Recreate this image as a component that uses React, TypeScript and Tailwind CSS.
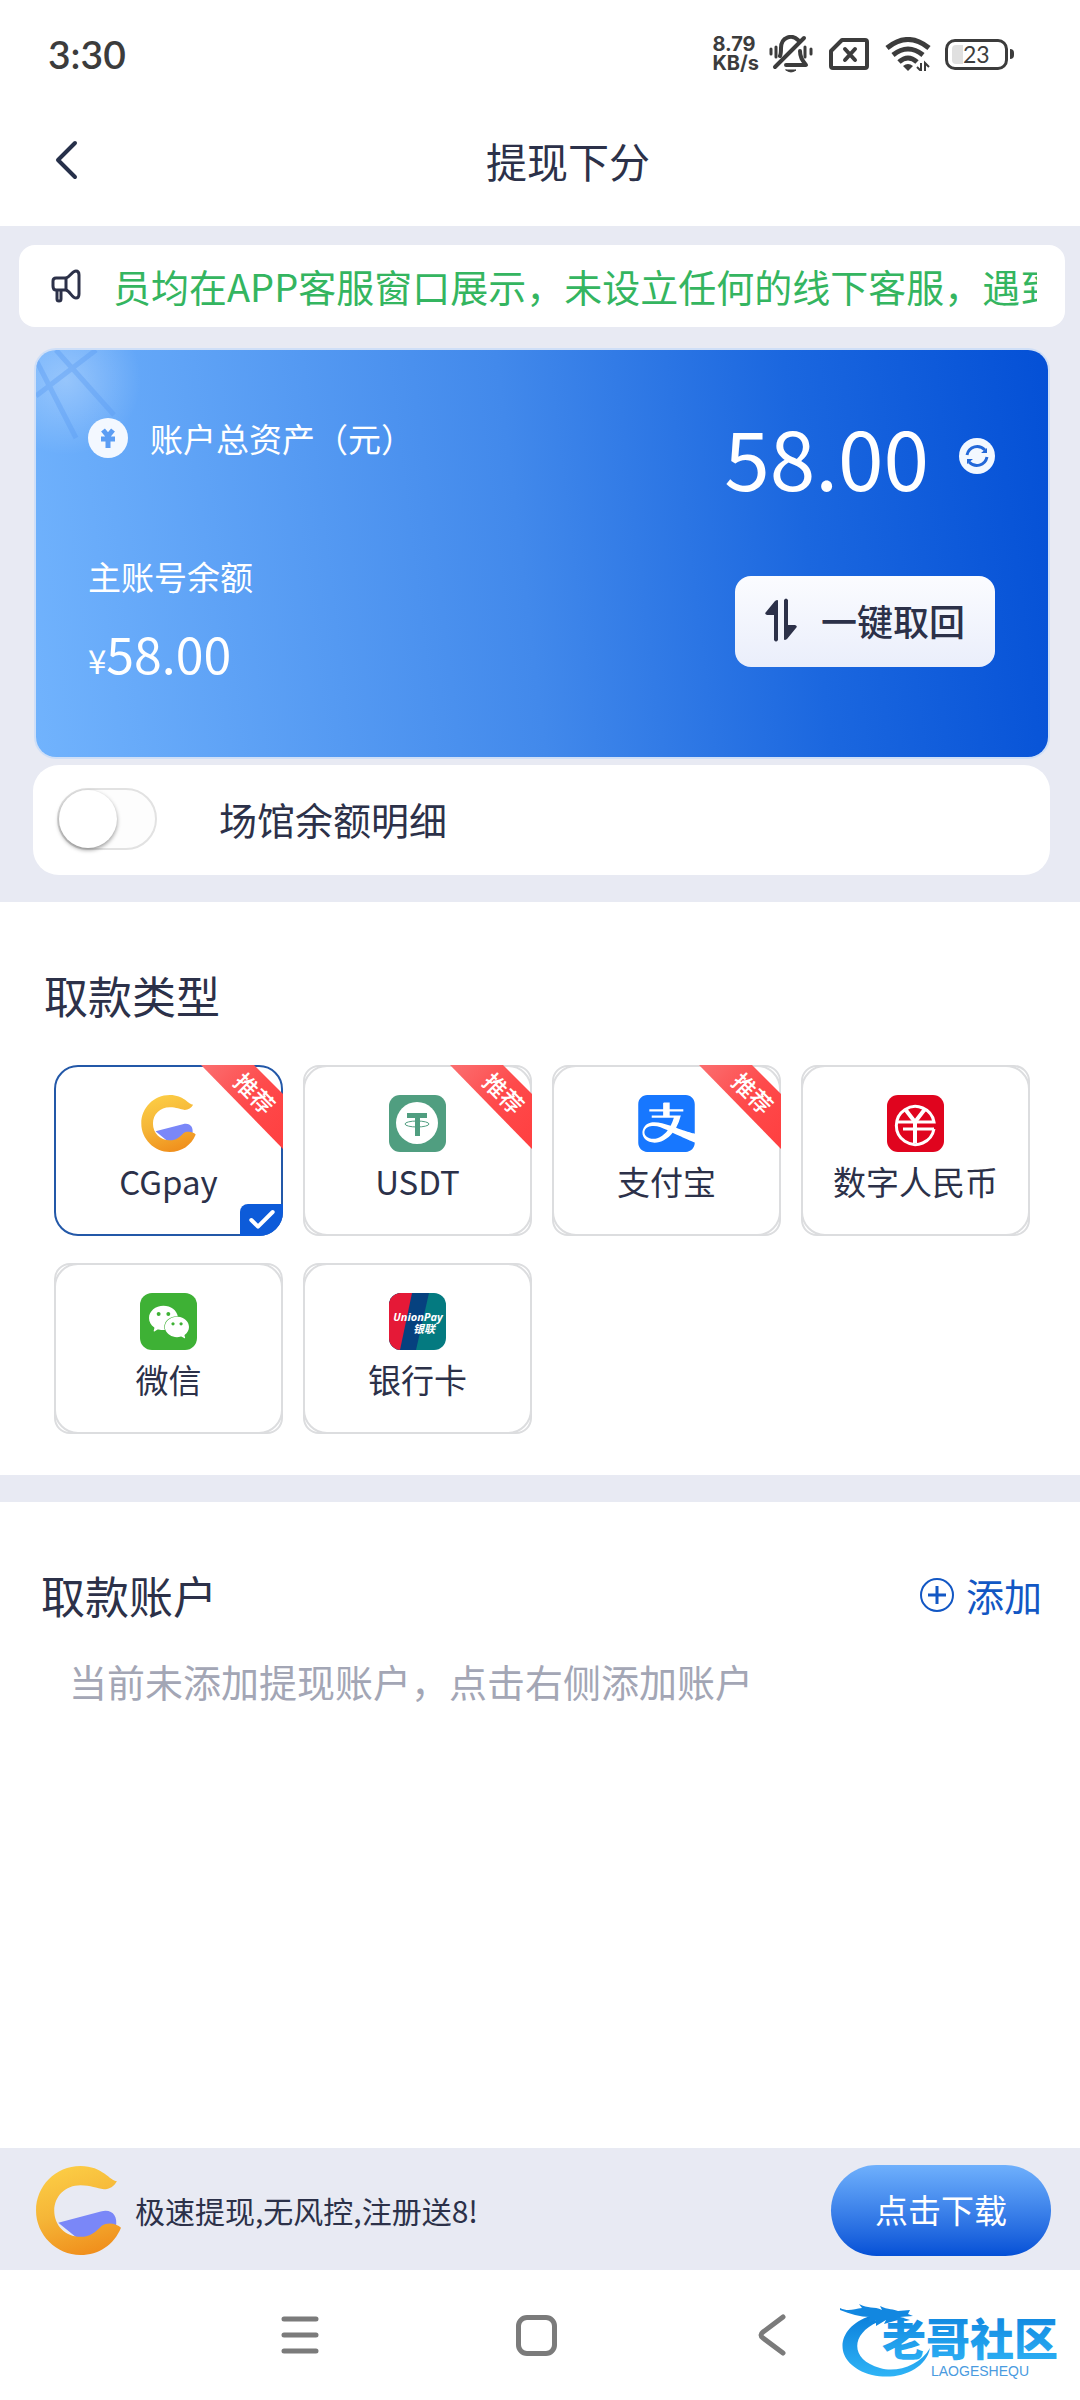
import { useId, useState, type ReactNode } from 'react';
import { Check } from 'lucide-react';
import { SiAlipay, SiWechat } from 'react-icons/si';

function StatusBar() {
    return (
        <div className="flex h-[108px] items-center justify-between pr-[66px] pl-12 text-[#3c3c3c]">
            <span className="font-['Lato','Noto_Sans',sans-serif] text-[39px] leading-none font-semibold">3:30</span>
            <div className="flex items-center">
                <div className="font-['Inter','Roboto',sans-serif] text-[20px] leading-[19px] font-bold">
                    <div>8.79</div>
                    <div>KB/s</div>
                </div>
                <svg className="ml-[10px] h-[38px] w-[44px]" viewBox="0 0 44 38" fill="none" stroke="currentColor" strokeWidth="4" strokeLinecap="round" strokeLinejoin="round">
                    <path d="M6 32 L35 3" />
                    <path d="M11 21 C12 19 12 17 12 13 C12 2 23 -1 29 5" />
                    <path d="M31 16 C31 22 33 25 37 30 H17" />
                    <path d="M17 35 H27 Q22 39 17 35 Z" strokeWidth="1" fill="currentColor" />
                    <path d="M2 14 V19 M7 12 V22 M36 12 V22 M42 14 V19" strokeWidth="3" />
                </svg>
                <svg className="ml-4 h-[32px] w-[40px]" viewBox="0 0 40 32" fill="none" stroke="currentColor" strokeWidth="4" strokeLinejoin="round">
                    <path d="M13 2 H36 Q38 2 38 4 V28 Q38 30 36 30 H4 Q2 30 2 28 V13 Z" />
                    <path d="M16 11 L26 22 M26 11 L16 22" strokeLinecap="round" />
                </svg>
                <svg className="ml-4 h-[34px] w-[46px]" viewBox="0 0 46 34" fill="none" stroke="currentColor" strokeWidth="5">
                    <path d="M2 11 Q23 -6 44 11" />
                    <path d="M8 18 Q23 6 38 18" />
                    <path d="M14 25 Q23 17 32 25" />
                    <path d="M18 29 Q23 25 28 29 L23 34 Z" fill="currentColor" stroke="none" />
                    <path d="M36 26 V34 L32 30 M40 34 V26 L44 30" strokeWidth="2" />
                </svg>
                <div className="ml-[14px] flex items-center gap-[2px]">
                    <div className="flex h-[31px] w-[63px] items-center rounded-[10px] border-3 border-[#3c3c3c] pl-1">
                        <div className="h-[19px] w-[11px] rounded-l-sm bg-[#e0e0e0]" />
                        <span className="font-['Lato','Noto_Sans',sans-serif] text-[23px] leading-none">23</span>
                    </div>
                    <div className="h-[10px] w-1 rounded-r bg-[#3c3c3c]" />
                </div>
            </div>
        </div>
    );
}

function Header() {
    return (
        <header className="flex h-[118px] items-center pr-[76px] pb-[14px] pl-9">
            <button type="button" aria-label="返回" className="flex h-20 w-24 items-center pl-[18px]">
                <svg className="h-10 w-6" viewBox="0 0 24 40" fill="none" stroke="#26304a" strokeWidth="4" strokeLinecap="round" strokeLinejoin="round">
                    <path d="M21 3 L4 20 L21 37" />
                </svg>
            </button>
            <h1 className="flex-1 text-center text-[41px] leading-[60px]">提现下分</h1>
        </header>
    );
}

function Notice() {
    return (
        <div className="mr-[15px] ml-[19px] flex h-[82px] items-center rounded-2xl bg-white pr-7 pl-8">
            <svg className="h-[34px] w-[30px] shrink-0" viewBox="0 0 30 34" fill="none" stroke="#2c3149" strokeWidth="3" strokeLinejoin="round">
                <path d="M15 9 H5 Q2 9 2 12 V17 Q2 21 5 21 H15 Z" />
                <path d="M15 9 C19 8 21 2 25 2 Q28 2 28 6 V25 Q28 29 25 29 C21 29 19 22 15 21" />
                <path d="M6 21 V30 Q6 32 8 32 Q10 32 10 30 V21" />
            </svg>
            <p className="ml-8 flex-1 overflow-hidden text-[38px] leading-[56px] whitespace-nowrap text-[#34b560]">
                员均在APP客服窗口展示，未设立任何的线下客服，遇到
            </p>
        </div>
    );
}

function BalanceCard() {
    return (
        <section className="relative mt-[23px] mr-8 ml-9 flex justify-between overflow-hidden rounded-[20px] bg-[linear-gradient(83deg,#71b3fd_0%,#4289eb_48%,#1b67df_75%,#0450d6_100%)] pr-[53px] pb-[69px] pl-[52px] text-white shadow-[0_0_0_2px_#cfdff7]">
            <svg className="absolute top-0 left-0 h-[120px] w-[120px]" viewBox="0 0 120 120" fill="none">
                <defs>
                    <radialGradient id="glow" cx="30" cy="30" r="75" gradientUnits="userSpaceOnUse">
                        <stop offset="0" stopColor="#fff" stopOpacity="0.3" />
                        <stop offset="1" stopColor="#fff" stopOpacity="0" />
                    </radialGradient>
                </defs>
                <path d="M0 0 H120 V120 H0 Z" fill="url(#glow)" />
                <path d="M0 46 L60 0 M20 0 L78 65 M0 10 L40 88" stroke="#5a9cf2" strokeOpacity="0.4" strokeWidth="5" />
            </svg>
            <div className="relative pt-[64px]">
                <div className="flex items-center gap-[22px]">
                    <svg className="h-10 w-10" viewBox="0 0 40 40">
                        <circle cx="20" cy="20" r="20" fill="#f3f8ff" />
                        <path d="M15 12 L20 18 L25 12 M13 21 H27 M20 18 V30" fill="none" stroke="#5b9df4" strokeWidth="5" />
                    </svg>
                    <h2 className="text-[33px] leading-[48px]">账户总资产（元）</h2>
                </div>
                <p className="mt-[90px] text-[33px] leading-[48px]">主账号余额</p>
                <p className="mt-4 text-[50px] leading-[72px]">
                    <span className="text-[33px] leading-none">¥</span>58.00
                </p>
            </div>
            <div className="relative flex flex-col items-end pt-[58px]">
                <div className="flex items-center gap-[30px]">
                    <span className="text-[82px] leading-24">58.00</span>
                    <button type="button" aria-label="刷新">
                        <svg className="h-9 w-9" viewBox="0 0 36 36" fill="none">
                            <circle cx="18" cy="18" r="18" fill="#f3f8ff" />
                            <path d="M8 17 C10 8 20 6 26 12 M28 19 C26 28 16 30 10 24" stroke="#2468d8" strokeWidth="3" />
                            <path d="M28 10 V15 H22 Z M8 26 V21 H14 Z" fill="#2468d8" />
                        </svg>
                    </button>
                </div>
                <button type="button" className="mt-[72px] flex h-[91px] w-[260px] items-center justify-center gap-6 rounded-2xl bg-linear-to-b from-[#fbfcff] to-[#eaeefb] pb-1 text-[36px] font-medium text-[#2c3149]">
                    <svg className="h-11 w-8" viewBox="0 0 32 44" fill="#2c3149">
                        <path d="M10 3 Q13 1 13 3 V42 Q11 45 9 42 V17 H2 Q-1 16 1 14 Z" />
                        <path d="M22 41 Q19 43 19 41 V2 Q21 -1 23 2 V27 H30 Q33 28 31 30 Z" />
                    </svg>
                    一键取回
                </button>
            </div>
        </section>
    );
}

function VenueToggle() {
    const [open, setOpen] = useState(false);
    return (
        <div className="mt-2 mr-[30px] ml-[33px] flex h-[110px] items-center rounded-[26px] bg-white pb-[2px] pl-6">
            <label className="flex items-center gap-[62px] text-[38px] leading-[56px]">
                <input type="checkbox" role="switch" className="peer sr-only" checked={open} onChange={(e) => setOpen(e.target.checked)} />
                <span className="flex h-[62px] w-[100px] rounded-full border-2 border-[#e2e2e2] bg-[#fdfdfd] peer-checked:justify-end peer-checked:bg-[#0d5bd9]">
                    <span className="h-[58px] w-[58px] rounded-full bg-white shadow-[0_2px_4px_rgba(0,0,0,0.4)]" />
                </span>
                场馆余额明细
            </label>
        </div>
    );
}

function CgLogo({ className }: { className: string }) {
    const id = useId();
    return (
        <svg className={className} viewBox="0 0 84 88">
            <defs>
                <linearGradient id={id} x1="0.3" y1="0" x2="0.6" y2="1">
                    <stop offset="0" stopColor="#fccd45" />
                    <stop offset="0.5" stopColor="#f5b537" />
                    <stop offset="1" stopColor="#f08f1c" />
                </linearGradient>
            </defs>
            <path d="M22 56 L64 45 C75 42 81 49 79 60 L66 66 L44 74 Z" fill="#7a87f8" />
            <path
                d="M80 15 C73 15 66 0 44 0 C19 0 0 20 0 44 C0 68 20 88 44 88 C62 88 77 78 84 61 C80 57 71 55 65 59 C59 65 54 70 44 70 C29 70 18 59 18 44 C18 30 29 19 44 19 C54 19 60 22 67 23 C73 23 77 20 80 15 Z"
                fill={`url(#${id})`}
            />
        </svg>
    );
}

function UsdtLogo() {
    return (
        <svg className="h-[57px] w-[57px]" viewBox="0 0 57 57">
            <rect width="57" height="57" rx="11" fill="#509e80" />
            <circle cx="28" cy="28" r="21" fill="#fff" />
            <path d="M18 18 H38 V23 H31 V41 H26 V23 H18 Z" fill="#509e80" />
            <ellipse cx="28" cy="29" rx="12" ry="3" fill="none" stroke="#509e80" />
        </svg>
    );
}

function DigitalYuanLogo() {
    return (
        <svg className="h-[57px] w-[57px]" viewBox="0 0 57 57" fill="none" stroke="#fff" strokeWidth="3">
            <rect width="57" height="57" rx="11" fill="#e0041e" stroke="none" />
            <path d="M47 34 A19 19 0 1 1 47 27 H10" />
            <path d="M18 14 L28 27 L38 14" strokeWidth="4" />
            <path d="M28 26 V48" strokeWidth="4" />
            <path d="M16 34 H47" />
        </svg>
    );
}

function WechatLogo() {
    return (
        <span className="flex h-[57px] w-[57px] items-center justify-center rounded-xl bg-[#3eb135]">
            <SiWechat className="h-10 w-10 text-white" />
        </span>
    );
}

function UnionPayLogo() {
    return (
        <svg className="h-[57px] w-[57px] rounded-xl" viewBox="0 0 57 57">
            <rect width="57" height="57" fill="#047a80" />
            <path d="M0 0 H40 L27 57 H0 Z" fill="#06417f" />
            <path d="M0 0 H23 L11 57 H0 Z" fill="#e51937" />
            <text x="29" y="28" textAnchor="middle" fill="#fff" className="font-['Open_Sans',sans-serif] text-[11px] font-bold italic">UnionPay</text>
            <text x="35" y="40" textAnchor="middle" fill="#fff" className="text-[11px] font-bold italic">银联</text>
        </svg>
    );
}

function Ribbon() {
    const id = useId();
    return (
        <svg className="absolute -top-0.5 -right-0.5 h-[84px] w-[82px]" viewBox="0 0 82 84">
            <defs>
                <linearGradient id={id} x1="0" y1="0" x2="1" y2="1">
                    <stop offset="0" stopColor="#fb6f70" />
                    <stop offset="0.5" stopColor="#fe4a4b" />
                    <stop offset="1" stopColor="#ff3f40" />
                </linearGradient>
            </defs>
            <path d="M0 0 H53 L82 29 V84 Z" fill={`url(#${id})`} />
            <text x="53" y="37" textAnchor="middle" fill="#fff" transform="rotate(45 53 29)" className="text-[23px] font-medium">推荐</text>
        </svg>
    );
}

type PayType = { name: string; logo: ReactNode; hot?: boolean };

const payTypes: PayType[] = [
    { name: 'CGpay', logo: <CgLogo className="h-[57px] w-[57px]" />, hot: true },
    { name: 'USDT', logo: <UsdtLogo />, hot: true },
    { name: '支付宝', logo: <SiAlipay className="h-[57px] w-[57px] text-[#1777ff]" />, hot: true },
    { name: '数字人民币', logo: <DigitalYuanLogo /> },
    { name: '微信', logo: <WechatLogo /> },
    { name: '银行卡', logo: <UnionPayLogo /> },
];

function PayTypes() {
    const [selected, setSelected] = useState('CGpay');
    return (
        <section className="pt-[61px] pr-[50px] pb-[41px] pl-[54px]">
            <h2 className="-ml-[10px] text-[44px] leading-[64px]">取款类型</h2>
            <div className="mt-[38px] grid grid-cols-4 gap-x-5 gap-y-[27px]">
                {payTypes.map((type) => {
                    const active = type.name === selected;
                    return (
                        <label key={type.name} className={`relative flex h-[171px] flex-col items-center rounded-2xl border-2 pt-7 ${active ? 'border-transparent' : 'border-[#dcdddf]'}`}>
                            <input type="radio" name="payType" className="sr-only" checked={active} onChange={() => setSelected(type.name)} />
                            <span className={`absolute -inset-0.5 rounded-3xl border-2 ${active ? 'border-[#2358a8]' : 'border-[#dcdddf]'}`} />
                            {type.logo}
                            <span className="mt-[5px] text-[33px] leading-[48px]">{type.name}</span>
                            {type.hot && <Ribbon />}
                            {active && (
                                <span className="absolute -right-0.5 -bottom-0.5 flex h-8 w-[43px] items-center justify-center rounded-tl-lg rounded-br-3xl bg-[#0d5bd9]">
                                    <Check className="h-8 w-8 text-white" strokeWidth={3} />
                                </span>
                            )}
                        </label>
                    );
                })}
            </div>
        </section>
    );
}

function Accounts() {
    return (
        <section className="pt-[61px] pr-[38px] pl-[41px]">
            <div className="flex items-center justify-between">
                <h2 className="text-[44px] leading-[64px]">取款账户</h2>
                <button type="button" className="flex items-center gap-3 text-[38px] leading-[56px] text-[#1257c4]">
                    <svg className="h-[34px] w-[34px]" viewBox="0 0 34 34" fill="none" stroke="currentColor" strokeWidth="2">
                        <circle cx="17" cy="17" r="16" />
                        <path d="M17 8 V26 M8 17 H26" strokeWidth="3" />
                    </svg>
                    添加
                </button>
            </div>
            <p className="mt-[26px] pl-7 text-[38px] leading-[56px] text-[#a3a6b5]">当前未添加提现账户，点击右侧添加账户</p>
        </section>
    );
}

function PromoBar() {
    return (
        <aside className="flex h-[122px] items-center bg-[#e8eaf3] pt-[2px] pr-[29px] pl-9">
            <CgLogo className="h-[89px] w-[85px]" />
            <p className="ml-[14px] flex-1 text-[30px] leading-[44px]">极速提现,无风控,注册送8!</p>
            <a href="#download" className="flex h-[91px] w-[220px] items-center justify-center rounded-full bg-linear-to-b from-[#6fb0fc] to-[#0450d6] text-[33px] text-white">
                点击下载
            </a>
        </aside>
    );
}

function Watermark() {
    return (
        <svg className="absolute top-8 right-[14px] h-[78px] w-[226px]" viewBox="0 0 226 78">
            <defs>
                <linearGradient id="wave" x1="0" y1="0" x2="0" y2="1">
                    <stop offset="0" stopColor="#0c80dc" />
                    <stop offset="1" stopColor="#2fb4f6" />
                </linearGradient>
            </defs>
            <path d="M30 14 C-6 26 -8 62 32 73 C58 79 86 68 90 46 C80 64 56 71 40 66 C10 58 10 32 38 20 Z" fill="url(#wave)" />
            <path
                d="M0 6 C8 10 14 7 22 6 L19 2 C28 7 34 4 42 8 L40 4 C48 8 54 7 58 9 L70 8 L68 12 L73 14 L60 15 L70 18 L66 19 L58 18 L44 22 L46 18 L36 24 L36 18 L28 21 L30 15 C20 15 10 12 0 8 Z"
                fill="#1287e0"
            />
            <text x="42" y="54" fill="url(#wave)" className="text-[44px] font-black">老哥社区</text>
            <text x="91" y="74" fill="#4a9be0" className="font-['Liberation_Sans',sans-serif] text-[14px]">LAOGESHEQU</text>
        </svg>
    );
}

function SystemNav() {
    return (
        <nav className="relative flex h-[130px] items-center justify-center gap-[118px] pr-2">
            <button type="button" aria-label="菜单" className="flex h-20 w-[118px] items-center justify-center">
                <svg className="h-10 w-10" viewBox="0 0 40 40" stroke="#7b7b7b" strokeWidth="5" strokeLinecap="round">
                    <path d="M4 4 H36 M4 20 H36 M4 36 H36" />
                </svg>
            </button>
            <button type="button" aria-label="主页" className="flex h-20 w-[118px] items-center justify-center">
                <span className="h-[41px] w-[41px] rounded-[11px] border-5 border-[#7b7b7b]" />
            </button>
            <button type="button" aria-label="后退" className="flex h-20 w-[118px] items-center justify-center">
                <svg className="h-[42px] w-7" viewBox="0 0 28 42" fill="none" stroke="#7b7b7b" strokeWidth="5" strokeLinecap="round">
                    <path d="M25 3 L5 18 Q1 21 5 24 L25 39" />
                </svg>
            </button>
            <Watermark />
        </nav>
    );
}

export default function App() {
    return (
        <div className="flex min-h-screen flex-col bg-white font-['Noto_Sans_CJK_SC',sans-serif] text-[#2c3149]">
            <StatusBar />
            <Header />
            <main className="flex-1">
                <div className="bg-[#e8eaf3] pt-[19px] pb-[27px]">
                    <Notice />
                    <BalanceCard />
                    <VenueToggle />
                </div>
                <PayTypes />
                <div className="h-[27px] bg-[#e8eaf3]" />
                <Accounts />
            </main>
            <PromoBar />
            <SystemNav />
        </div>
    );
}
